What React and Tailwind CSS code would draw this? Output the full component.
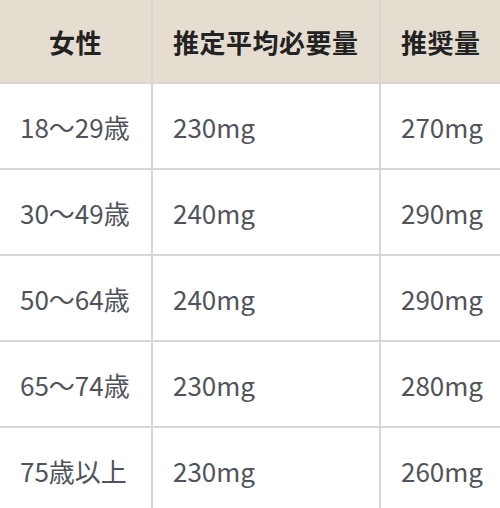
import React from 'react';

const ROWS = [
  { age: '18〜29歳', ear: '230mg', rda: '270mg' },
  { age: '30〜49歳', ear: '240mg', rda: '290mg' },
  { age: '50〜64歳', ear: '240mg', rda: '290mg' },
  { age: '65〜74歳', ear: '230mg', rda: '280mg' },
  { age: '75歳以上', ear: '230mg', rda: '260mg' },
];

const font = { fontFamily: '"Noto Sans CJK JP", "Noto Sans", sans-serif' };

export default function App() {
  return (
    <div className="w-[500px] h-[508px] overflow-hidden bg-white" style={font}>
      <table className="w-[500px] border-collapse table-fixed">
        <colgroup>
          <col className="w-[152px]" />
          <col className="w-[228px]" />
          <col />
        </colgroup>
        <thead>
          <tr className="bg-[#e6ddd1] h-[83px]">
            <th className="border-r-2 border-b-2 border-[#d6d6d6] text-center text-[26px] tracking-[0.02em] font-bold text-[#222]">女性</th>
            <th className="border-r-2 border-b-2 border-[#d6d6d6] text-left pl-5 text-[26px] tracking-[0.02em] font-bold text-[#222] whitespace-nowrap">推定平均必要量</th>
            <th className="border-b-2 border-[#d6d6d6] text-left pl-5 text-[26px] tracking-[0.02em] font-bold text-[#222]">推奨量</th>
          </tr>
        </thead>
        <tbody>
          {ROWS.map((r) => (
            <tr key={r.age} className="h-[86px]">
              <td className="border-r-2 border-b-2 border-[#d6d6d6] pl-5 text-[26px] text-[#4f545c] whitespace-nowrap">{r.age}</td>
              <td className="border-r-2 border-b-2 border-[#d6d6d6] pl-5 text-[26px] text-[#4f545c]">{r.ear}</td>
              <td className="border-b-2 border-[#d6d6d6] pl-5 text-[26px] text-[#4f545c]">{r.rda}</td>
            </tr>
          ))}
        </tbody>
      </table>
    </div>
  );
}
